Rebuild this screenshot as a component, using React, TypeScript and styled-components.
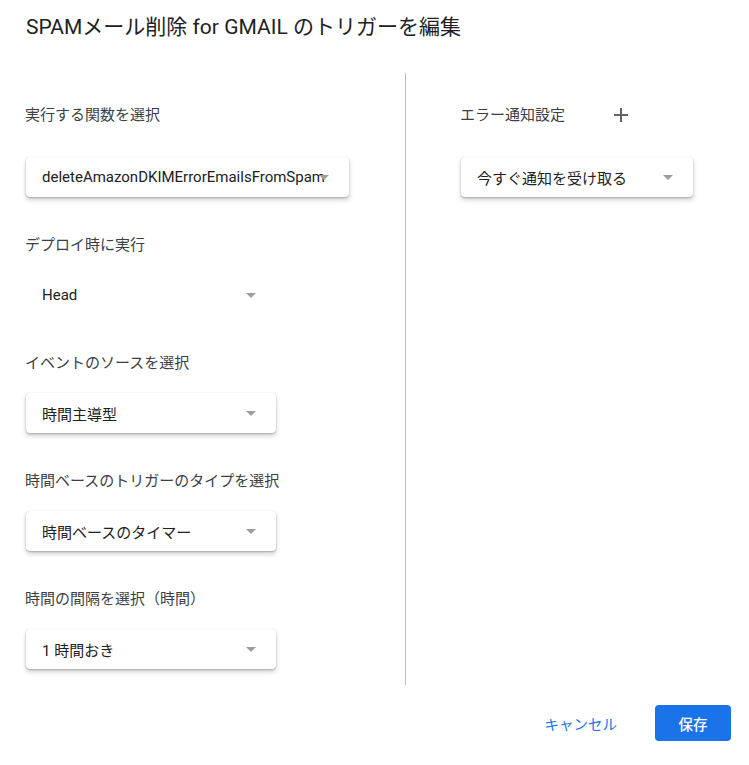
import styled, { createGlobalStyle } from "styled-components";

const GlobalStyle = createGlobalStyle`
  html, body {
    margin: 0;
    padding: 0;
    background: #fff;
  }
  body {
    font-family: Roboto, "Noto Sans CJK JP", sans-serif;
    color: #202124;
  }
`;

const fields = [
  { label: "デプロイ時に実行", value: "Head", flat: true },
  { label: "イベントのソースを選択", value: "時間主導型" },
  { label: "時間ベースのトリガーのタイプを選択", value: "時間ベースのタイマー" },
  { label: "時間の間隔を選択（時間）", value: "1 時間おき" },
];

const Select = ({ value, width, flat }: { value: string; width: number; flat?: boolean }) => (
  <SelectBox $width={width} $flat={flat}>
    <SelectText>{value}</SelectText>
    <Arrow />
  </SelectBox>
);

const App = () => {
  return (
    <Dialog>
      <GlobalStyle />
      <Title>SPAMメール削除 for GMAIL のトリガーを編集</Title>
      <Columns>
        <LeftColumn>
          <HeadRow>
            <Label>実行する関数を選択</Label>
          </HeadRow>
          <Select value="deleteAmazonDKIMErrorEmailsFromSpam" width={323} />
          {fields.map((f) => (
            <Field key={f.label}>
              <Label>{f.label}</Label>
              <Select value={f.value} width={250} flat={f.flat} />
            </Field>
          ))}
        </LeftColumn>
        <RightColumn>
          <HeadRow>
            <Label>エラー通知設定</Label>
            <IconButton aria-label="追加">
              <svg width="14" height="14" viewBox="0 0 14 14">
                <path d="M7 0v14M0 7h14" stroke="#5f6368" strokeWidth="2" />
              </svg>
            </IconButton>
          </HeadRow>
          <Select value="今すぐ通知を受け取る" width={232} />
        </RightColumn>
      </Columns>
      <Footer>
        <TextButton>キャンセル</TextButton>
        <PrimaryButton>保存</PrimaryButton>
      </Footer>
    </Dialog>
  );
};

const Dialog = styled.div`
  width: 749px;
  height: 765px;
  box-sizing: border-box;
  padding: 0 18px 0 25px;
  display: flex;
  flex-direction: column;
`;

const Title = styled.h1`
  margin: 13px 0 0 1px;
  font-size: 21px;
  line-height: 28px;
  font-weight: 400;
  color: #202124;
`;

const Columns = styled.div`
  margin-top: 32px;
  display: flex;
`;

const LeftColumn = styled.div`
  width: 381px;
  box-sizing: border-box;
  padding: 22px 0 16px 1px;
  border-right: 1px solid #bdbdbd;
  display: flex;
  flex-direction: column;
`;

const RightColumn = styled.div`
  flex: 1;
  padding: 22px 0 0 55px;
  display: flex;
  flex-direction: column;
`;

const HeadRow = styled.div`
  height: 40px;
  margin-bottom: 22px;
  display: flex;
  align-items: center;
`;

const Field = styled.div`
  margin-top: 38px;
  display: flex;
  flex-direction: column;
  gap: 20px;
`;

const Label = styled.div`
  margin-left: -1px;
  font-size: 15px;
  line-height: 20px;
  color: #3c4043;
`;

const IconButton = styled.button`
  margin-left: 36px;
  width: 40px;
  height: 40px;
  border: none;
  background: none;
  padding: 0;
  display: flex;
  align-items: center;
  justify-content: center;
  cursor: pointer;
`;

const SelectBox = styled.div<{ $width: number; $flat?: boolean }>`
  position: relative;
  width: ${(p) => p.$width}px;
  height: 40px;
  box-sizing: border-box;
  padding-left: 16px;
  border-radius: 4px;
  background: #fff;
  display: flex;
  align-items: center;
  white-space: nowrap;
  box-shadow: ${(p) =>
    p.$flat
      ? "none"
      : "0 1px 2px 0 rgba(0,0,0,.2), 0 3px 5px 0 rgba(0,0,0,.18), 0 0 1px 0 rgba(0,0,0,.15)"};
`;

const SelectText = styled.span`
  font-size: 15px;
  color: #212121;
`;

const Arrow = styled.span`
  position: absolute;
  right: 20px;
  top: 18px;
  width: 0;
  height: 0;
  border-left: 5px solid transparent;
  border-right: 5px solid transparent;
  border-top: 5px solid #9e9e9e;
`;

const Footer = styled.div`
  margin-top: 20px;
  display: flex;
  justify-content: flex-end;
  align-items: center;
`;

const TextButton = styled.button`
  border: none;
  background: none;
  font-family: inherit;
  font-size: 14.5px;
  color: #1a73e8;
  padding: 0 16px;
  height: 36px;
  margin-right: 22px;
  cursor: pointer;
`;

const PrimaryButton = styled.button`
  width: 76px;
  height: 36px;
  border: none;
  border-radius: 4px;
  background: #1a73e8;
  color: #fff;
  font-family: inherit;
  font-size: 14.5px;
  font-weight: 500;
  cursor: pointer;
`;

export default App;
